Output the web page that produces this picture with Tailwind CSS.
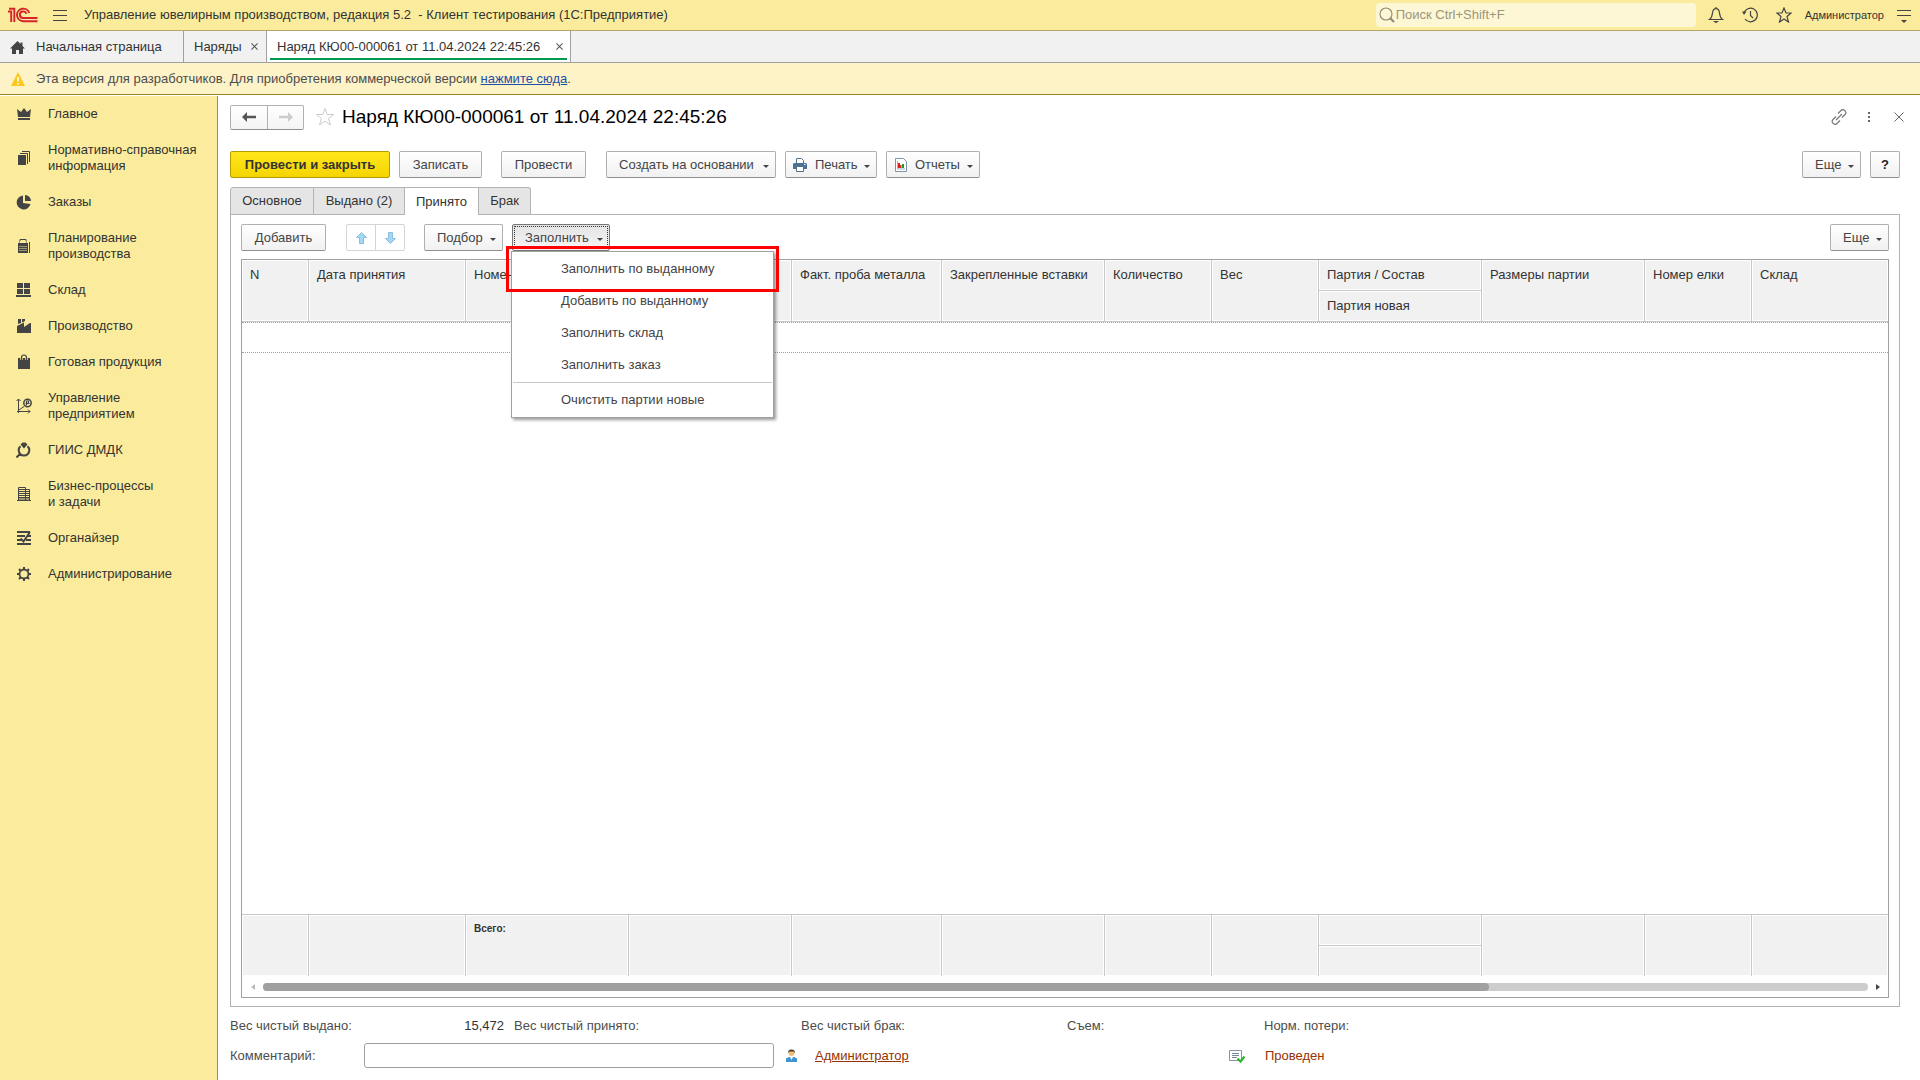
<!DOCTYPE html>
<html lang="ru">
<head>
<meta charset="utf-8">
<title>Управление ювелирным производством</title>
<script src="https://cdn.jsdelivr.net/npm/@tailwindcss/browser@4"></script>
</head>
<body class="flex h-screen flex-col overflow-hidden bg-white font-['Liberation_Sans',Arial,sans-serif] text-[13px] leading-4 text-[#333]">

<!-- Title bar -->
<header class="flex h-[31px] shrink-0 items-center border-b border-[#b3a668] bg-[#faec9c]">
  <svg class="ml-2 h-4 w-[30px]" viewBox="0 0 30 16" fill="none" stroke="#d8232a" stroke-width="1.9"><path d="M0 4.500h3.200V15M1 1.800h5.300V15M21.300 6a6.300 6.300 0 1 0-6.300 8.200H29.500M18.300 6.800a3.300 3.300 0 1 0-3.300 4.200H29.500"/></svg>
  <button class="ml-[15px]" aria-label="Меню"><svg class="h-4 w-[14px]" viewBox="0 0 14 16" stroke="#444" stroke-width="1.200"><path d="M0 3.500h14M0 8.500h14M0 13.500h14"/></svg></button>
  <h1 class="ml-[17px] whitespace-pre text-[#333]">Управление ювелирным производством, редакция 5.2  - Клиент тестирования (1С:Предприятие)</h1>
  <div class="ml-auto flex items-center">
    <label class="flex h-6 w-80 items-center rounded-sm bg-[#fef7d6] pl-[3px]">
      <svg class="h-4 w-4 shrink-0" viewBox="0 0 16 16" fill="none" stroke="#8d8972" stroke-width="1.100"><circle cx="7" cy="7" r="6"/><path d="m11 11 4 4" stroke-width="2"/></svg>
      <input class="ml-px w-full bg-transparent outline-none placeholder:text-[#9a957b]" placeholder="Поиск Ctrl+Shift+F" aria-label="Поиск">
    </label>
    <button class="ml-3" aria-label="Уведомления"><svg class="h-4 w-4" viewBox="0 0 16 16" fill="none" stroke="#444" stroke-width="1.200"><path d="M8 0v1.500M1.500 12.500h13C12.500 11 11.800 9 11.500 6 11.200 3 10 1.700 8 1.700S4.800 3 4.500 6C4.200 9 3.500 11 1.500 12.500Z"/><path d="M5 14h6l-3 2.200z" fill="#444" stroke="none"/></svg></button>
    <button class="ml-[18px]" aria-label="История"><svg class="h-4 w-4" viewBox="0 0 16 16" fill="none" stroke="#444" stroke-width="1.200"><path d="M2 6a6.800 6.800 0 1 1 1 6M8.500 4v4.500l2.500 2.500"/><path d="M0 4.500h4.500L2 8z" fill="#444" stroke="none"/></svg></button>
    <button class="ml-[18px]" aria-label="Избранное"><svg class="h-4 w-4" viewBox="0 0 16 16" fill="none" stroke="#444" stroke-width="1.200"><path d="m8 1 2 5h5l-4 3.500 1.500 5.500L8 12l-4.500 3L5 9.500 1 6h5z"/></svg></button>
    <span class="ml-[13px] text-[11px] text-[#333]">Администратор</span>
    <button class="mr-[9px] ml-[13px]" aria-label="Настройки"><svg class="h-4 w-[14px]" viewBox="0 0 14 16" fill="none" stroke="#444" stroke-width="1.200"><path d="M0 3.500h14M0 8.500h14"/><path d="M4 13h6l-3 3z" fill="#444" stroke="none"/></svg></button>
  </div>
</header>

<!-- Open windows -->
<nav class="flex h-8 shrink-0 border-b border-[#a0a0a0] bg-[#f1f1f1]">
  <a href="#" class="flex w-[184px] items-center border-r border-[#a0a0a0] pl-[10px]">
    <svg class="h-4 w-[15px]" viewBox="0 0 15 16" fill="#444"><path d="M7.500 2 0 9.500h2V15h4v-4h3v4h4V9.500h2L12.500 7V3.500h-2V5z"/></svg>
    <span class="ml-[11px]">Начальная страница</span>
  </a>
  <a href="#" class="flex w-[83px] items-center border-r border-[#a0a0a0] pl-[10px]">Наряды
    <svg class="mr-2 ml-auto h-[7px] w-[7px]" viewBox="0 0 8 8" stroke="#555" stroke-width="1.200"><path d="m.5.5 7 7m0-7-7 7"/></svg>
  </a>
  <a href="#" class="flex w-[304px] border-r border-[#a0a0a0] bg-white px-[3px]">
    <span class="mb-[2px] flex w-full items-center border-b-2 border-[#009b4e] pt-1 pl-[7px]">Наряд КЮ00-000061 от 11.04.2024 22:45:26
    <svg class="mr-1 ml-auto h-[7px] w-[7px]" viewBox="0 0 8 8" stroke="#555" stroke-width="1.200"><path d="m.5.5 7 7m0-7-7 7"/></svg></span>
  </a>
</nav>

<div class="flex h-8 shrink-0 items-center border-b border-[#a08423] bg-[#fef2c7] pl-[11px] text-[#4d4d4d]">
  <svg class="mr-[11px] h-[14px] w-[14px]" viewBox="0 0 14 14"><path d="M7 0 14 14H0z" fill="#fbc91b"/><path d="M7 5v4.500M7 11v1.500" stroke="#fff" stroke-width="1.600"/></svg>
  <p>Эта версия для разработчиков. Для приобретения коммерческой версии <a href="#" class="text-[#1b4fa8] underline">нажмите сюда</a>.</p>
</div>

<div class="flex min-h-0 flex-1 pt-px">
<!-- Sections -->
<nav class="w-[218px] shrink-0 border-r border-[#9c9150] bg-[#faec9c] text-[#333]">
  <a href="#" class="flex items-center py-[10px]"><svg class="mr-4 ml-4 h-4 w-4 shrink-0" viewBox="0 0 16 16" fill="#444"><path d="m1 3 4 3 3-4 3 4 4-3-1 8H2zM2 12h12v2H2z"/></svg>Главное</a>
  <a href="#" class="flex items-center py-[10px]"><svg class="mr-4 ml-4 h-4 w-4 shrink-0" viewBox="0 0 16 16" fill="#444"><path d="M2 5h8v10H2z"/><path d="M4 3.500h7.500V14M6 1.500h7.500V12" fill="none" stroke="#444"/></svg><span>Нормативно-справочная<br>информация</span></a>
  <a href="#" class="flex items-center py-[10px]"><svg class="mr-4 ml-4 h-4 w-4 shrink-0" viewBox="0 0 16 16" fill="#444"><path d="M7 1.500V9l7.500 1A7 7 0 1 1 7 1.500zM9 1a6 6 0 0 1 6 6H9z"/></svg>Заказы</a>
  <a href="#" class="flex items-center py-[10px]"><svg class="mr-4 ml-4 h-4 w-4 shrink-0" viewBox="0 0 16 16"><path d="M2 5h10v10H2zM13 4h1v11h-1z" fill="#444"/><path d="M4 5.500v-4h6v4" fill="none" stroke="#444"/><path d="M4 3h6v2H4z" fill="#faec9c"/><path d="M3.500 8.500h8m-8 2h8m-8 2h8" stroke="#faec9c" stroke-dasharray="1 1"/></svg><span>Планирование<br>производства</span></a>
  <a href="#" class="flex items-center py-[10px]"><svg class="mr-4 ml-4 h-4 w-4 shrink-0" viewBox="0 0 16 16" fill="#444"><path d="M1 1h6v5H1zM8 1h6v5H8zM1 7h6v5H1zM8 7h6v5H8zM0 13h15v2H0z"/></svg>Склад</a>
  <a href="#" class="flex items-center py-[10px]"><svg class="mr-4 ml-4 h-4 w-4 shrink-0" viewBox="0 0 16 16" fill="#444"><path d="M2 1h3v4L2 6zM6 1h3v2L6 4.500zM1 15V8l7-3.500V9l6-4h1v10z"/></svg>Производство</a>
  <a href="#" class="flex items-center py-[10px]"><svg class="mr-4 ml-4 h-4 w-4 shrink-0" viewBox="0 0 16 16" fill="#444"><path d="M2 4h12v11H2z"/><path d="M5.500 6V4a2.500 2.500 0 0 1 5 0v2" fill="none" stroke="#faec9c" stroke-width="2.500"/><path d="M5.500 6.500V3.500a2.500 2.500 0 0 1 5 0v3" fill="none" stroke="#444" stroke-width="1.200"/></svg>Готовая продукция</a>
  <a href="#" class="flex items-center py-[10px]"><svg class="mr-4 ml-4 h-4 w-4 shrink-0" viewBox="0 0 16 16" fill="none" stroke="#444"><path d="M2.500 1v14M.500 3l2-2 2 2M1 13.500h13M12 11.500l2 2-2 2M3 12l5-3.500"/><circle cx="11.500" cy="5" r="3.700" stroke-width="1.500"/><path d="M10.500 3v4.500M9.500 5.500h4M10.500 3h2v2.500" stroke-width="1.200"/></svg><span>Управление<br>предприятием</span></a>
  <a href="#" class="flex items-center py-[10px]"><svg class="mr-4 ml-4 h-4 w-4 shrink-0" viewBox="0 0 16 16" fill="none" stroke="#444" stroke-width="2"><path d="M4.500 4.300a5.300 5.300 0 1 0 7 0M4 12 .500 15.500"/><path d="M4.500 2.500 6.500.500h3l2 2L8 6.500z" fill="#444" stroke="none"/></svg>ГИИС ДМДК</a>
  <a href="#" class="flex items-center py-[10px]"><svg class="mr-4 ml-4 h-4 w-4 shrink-0" viewBox="0 0 16 16" fill="none" stroke="#444"><path d="M2.500 15V1.500h7V15M9.500 3.500h4V15M1 14.500h14M3 3.500h6m-6 2h6m-6 2h6m-6 2h6m-6 2h6m-6 1.500h6m1-7.500h3m-3 2h3m-3 2h3m-3 2h3m-3 1.500h3"/></svg><span>Бизнес-процессы<br>и задачи</span></a>
  <a href="#" class="flex items-center py-[10px]"><svg class="mr-4 ml-4 h-4 w-4 shrink-0" viewBox="0 0 16 16" fill="none" stroke="#444" stroke-width="2"><path d="M1 2h13M1 6h8M12 6h3M1 10h4M10 10h5M1 14h14M4.500 8.500l3 3L14 2"/></svg>Органайзер</a>
  <a href="#" class="flex items-center py-[10px]"><svg class="mr-4 ml-4 h-4 w-4 shrink-0" viewBox="0 0 16 16" fill="none" stroke="#444"><circle cx="8" cy="8" r="4.500" stroke-width="1.800"/><path d="M8 1v2.500M8 12.500V15M1 8h2.500M12.500 8H15M3 3l2 2M11 11l2 2M3 13l2-2M11 5l2-2" stroke-width="2"/></svg>Администрирование</a>
</nav>

<main class="flex min-w-0 flex-1 flex-col pr-5 pl-3">
  <!-- Form title -->
  <div class="flex h-[42px] shrink-0 items-center">
    <div class="flex h-[25px] rounded-xs border border-[#b0b0b0] border-b-[#909090] bg-linear-to-b from-white to-[#f4f4f4]">
      <button class="flex w-[37px] items-center justify-center border-r border-[#b0b0b0]" aria-label="Назад"><svg class="h-[10px] w-[14px]" viewBox="0 0 14 10" fill="#555"><path d="M0 5 5 0v3.800h9v2.400H5V10z"/></svg></button>
      <button class="flex w-[35px] items-center justify-center" aria-label="Вперед"><svg class="h-[10px] w-[14px]" viewBox="0 0 14 10" fill="#ccc"><path d="m14 5-5-5v3.800H0v2.400h9V10z"/></svg></button>
    </div>
    <button class="ml-3" aria-label="В избранное"><svg class="h-5 w-[18px]" viewBox="0 0 18 20" fill="none" stroke="#ccc"><path d="m9 1.500 2.200 6h6.300l-5 4 2 6.500L9 14l-5.500 4 2-6.500-5-4h6.300z"/></svg></button>
    <h2 class="ml-2 text-[19px] text-black">Наряд КЮ00-000061 от 11.04.2024 22:45:26</h2>
    <div class="-mr-[7px] ml-auto flex items-center gap-[14px]">
      <button aria-label="Ссылка"><svg class="h-4 w-4" viewBox="0 0 16 16" fill="none" stroke="#777" stroke-width="1.200"><path d="m5 11 6-6M7 4.500l3-3c2.500-2.500 6.500 1.500 4 4l-3 3M9 11.500l-3 3c-2.500 2.500-6.500-1.500-4-4l3-3"/></svg></button>
      <button aria-label="Еще"><svg class="h-4 w-4" viewBox="0 0 16 16" fill="#666"><path d="M7 3h2v2H7zM7 7h2v2H7zM7 11h2v2H7z"/></svg></button>
      <button aria-label="Закрыть"><svg class="h-4 w-4" viewBox="0 0 16 16" stroke="#666"><path d="m3.500 3.500 9 9M12.500 3.500l-9 9"/></svg></button>
    </div>
  </div>

  <!-- Command bar -->
  <div class="mt-[13px] flex h-[27px] shrink-0 text-[#444]">
    <button class="w-[160px] rounded-xs border border-[#b59b00] bg-linear-to-b from-[#ffe61a] to-[#f5d500] font-bold text-[#333]">Провести и закрыть</button>
    <button class="ml-[9px] w-[83px] rounded-xs border border-[#b0b0b0] border-b-[#909090] bg-linear-to-b from-white to-[#f1f1f1]">Записать</button>
    <button class="ml-[19px] w-[85px] rounded-xs border border-[#b0b0b0] border-b-[#909090] bg-linear-to-b from-white to-[#f1f1f1]">Провести</button>
    <button class="ml-5 flex w-[170px] items-center justify-between rounded-xs border border-[#b0b0b0] border-b-[#909090] bg-linear-to-b from-white to-[#f1f1f1] pr-[6px] pl-3">Создать на основании<svg class="mt-[3px] h-[3px] w-[6px]" viewBox="0 0 6 3" fill="#444"><path d="M0 0h6L3 3z"/></svg></button>
    <button class="ml-[9px] flex w-[92px] items-center rounded-xs border border-[#b0b0b0] border-b-[#909090] bg-linear-to-b from-white to-[#f1f1f1] pr-[6px] pl-[7px]"><svg class="mr-2 h-[14px] w-[14px]" viewBox="0 0 14 14"><path d="M3.500 5V.500h5l2 2V5" fill="#fff" stroke="#56708a"/><path d="M1 5h12l1 1v5H0V6z" fill="#4a7299"/><path d="M3.500 8.500h7v5h-7z" fill="#fff" stroke="#56708a"/><path d="M11 6.500h1.500" stroke="#fff"/></svg>Печать<svg class="mt-[3px] ml-auto h-[3px] w-[6px]" viewBox="0 0 6 3" fill="#444"><path d="M0 0h6L3 3z"/></svg></button>
    <button class="ml-[9px] flex w-[94px] items-center rounded-xs border border-[#b0b0b0] border-b-[#909090] bg-linear-to-b from-white to-[#f1f1f1] pr-[6px] pl-2"><svg class="mr-2 h-[14px] w-3" viewBox="0 0 12 14"><path d="M.500.500h8l3 3v10H.500z" fill="#fff" stroke="#7f93a8"/><path d="M2.500 3v8H10" fill="none" stroke="#9fb0c0"/><path d="M3 5h2v5H3z" fill="#e02020"/><path d="M5 7h1.500v3H5z" fill="#e02020"/><path d="M7 6h2v4H7z" fill="#15a015"/></svg>Отчеты<svg class="mt-[3px] ml-auto h-[3px] w-[6px]" viewBox="0 0 6 3" fill="#444"><path d="M0 0h6L3 3z"/></svg></button>
    <button class="ml-auto flex w-[59px] items-center justify-between rounded-xs border border-[#b0b0b0] border-b-[#909090] bg-linear-to-b from-white to-[#f1f1f1] pr-[6px] pl-3">Еще<svg class="mt-[3px] h-[3px] w-[6px]" viewBox="0 0 6 3" fill="#444"><path d="M0 0h6L3 3z"/></svg></button>
    <button class="ml-[9px] w-[30px] rounded-xs border border-[#b0b0b0] border-b-[#909090] bg-linear-to-b from-white to-[#f1f1f1] font-bold text-[#222]">?</button>
  </div>

  <!-- Page tabs -->
  <div class="z-10 mt-[9px] -mb-px flex h-7 shrink-0 text-[#333]" role="tablist">
    <button role="tab" class="w-[84px] rounded-tl-[3px] border border-[#b3b3b3] bg-[#e5e5e5]">Основное</button>
    <button role="tab" class="w-[90px] border-y border-[#b3b3b3] bg-[#e5e5e5]">Выдано (2)</button>
    <button role="tab" aria-selected="true" class="w-[75px] border-x border-t border-[#b3b3b3] bg-white">Принято</button>
    <button role="tab" class="w-[52px] rounded-tr-[3px] border-y border-r border-[#b3b3b3] bg-[#e5e5e5]">Брак</button>
  </div>

  <section class="flex min-h-0 flex-1 flex-col border border-[#b3b3b3] px-[10px] pt-[9px] pb-2">
    <div class="flex h-[27px] shrink-0 text-[#444]">
      <button class="w-[85px] rounded-xs border border-[#b0b0b0] border-b-[#909090] bg-linear-to-b from-white to-[#f1f1f1]">Добавить</button>
      <div class="ml-5 flex w-[59px] rounded-xs border border-[#d5d5d5]">
        <button class="flex flex-1 items-center justify-center border-r border-[#d5d5d5]" aria-label="Вверх"><svg class="h-3 w-[11px]" viewBox="0 0 11 12" fill="#a3d8f5" stroke="#8bbfdc"><path d="m5.500.500 5 5h-3v6h-4v-6h-3z"/></svg></button>
        <button class="flex flex-1 items-center justify-center" aria-label="Вниз"><svg class="h-3 w-[11px]" viewBox="0 0 11 12" fill="#a3d8f5" stroke="#8bbfdc"><path d="m5.500 11.500-5-5h3v-6h4v6h3z"/></svg></button>
      </div>
      <button class="ml-[19px] flex w-[79px] items-center justify-between rounded-xs border border-[#b0b0b0] border-b-[#909090] bg-linear-to-b from-white to-[#f1f1f1] pr-[6px] pl-3">Подбор<svg class="mt-[3px] h-[3px] w-[6px]" viewBox="0 0 6 3" fill="#444"><path d="M0 0h6L3 3z"/></svg></button>
      <div class="relative ml-[9px] flex">
        <button class="flex w-[98px] rounded-xs border border-[#777] bg-linear-to-b from-[#e4e4e4] to-[#f6f6f6] p-px" aria-expanded="true"><span class="flex h-full w-full items-center justify-between border border-dotted border-[#333] pr-1 pl-[10px]">Заполнить<svg class="mt-[3px] h-[3px] w-[6px]" viewBox="0 0 6 3" fill="#444"><path d="M0 0h6L3 3z"/></svg></span></button>
        <div class="absolute top-[27px] -left-px z-20 flex w-[263px] flex-col border border-[#a0a0a0] bg-white py-px shadow-[2px_2px_3px_#0006]" role="menu">
          <button role="menuitem" class="h-8 pl-[49px] text-left">Заполнить по выданному</button>
          <button role="menuitem" class="h-8 pl-[49px] text-left">Добавить по выданному</button>
          <button role="menuitem" class="h-8 pl-[49px] text-left">Заполнить склад</button>
          <button role="menuitem" class="h-8 pl-[49px] text-left">Заполнить заказ</button>
          <hr class="mx-px my-px border-[#c8c8c8]">
          <button role="menuitem" class="h-8 pl-[49px] text-left">Очистить партии новые</button>
        </div>
        <div class="absolute top-[22px] -left-[6px] z-30 h-[46px] w-[273px] border-3 border-[#f00]"></div>
      </div>
      <button class="ml-auto flex w-[59px] items-center justify-between rounded-xs border border-[#b0b0b0] border-b-[#909090] bg-linear-to-b from-white to-[#f1f1f1] pr-[6px] pl-3">Еще<svg class="mt-[3px] h-[3px] w-[6px]" viewBox="0 0 6 3" fill="#444"><path d="M0 0h6L3 3z"/></svg></button>
    </div>

    <div class="mt-2 flex min-h-0 flex-1 flex-col border border-[#a0a0a0]">
      <div class="min-h-0 flex-1">
      <table class="h-full w-full table-fixed border-separate border-spacing-0 text-left">
        <colgroup><col class="w-[67px]"><col class="w-[157px]"><col class="w-[163px]"><col class="w-[163px]"><col class="w-[150px]"><col class="w-[163px]"><col class="w-[107px]"><col class="w-[107px]"><col class="w-[163px]"><col class="w-[163px]"><col class="w-[107px]"><col></colgroup>
        <thead class="[&_th]:overflow-hidden [&_th]:border-r [&_th]:border-b [&_th]:border-[#c8c8c8] [&_th]:bg-[#f1f1f1] [&_th]:px-2 [&_th]:pt-[7px] [&_th]:align-top [&_th]:font-normal [&_th]:whitespace-nowrap [&_th]:shadow-[inset_0_0_0_1px_#fff]">
          <tr class="h-[31px]"><th rowspan="2">N</th><th rowspan="2">Дата принятия</th><th rowspan="2">Номенклатура</th><th rowspan="2"></th><th rowspan="2">Факт. проба металла</th><th rowspan="2">Закрепленные вставки</th><th rowspan="2">Количество</th><th rowspan="2">Вес</th><th>Партия / Состав</th><th rowspan="2">Размеры партии</th><th rowspan="2">Номер елки</th><th rowspan="2" class="border-r-0!">Склад</th></tr>
          <tr class="h-[31px]"><th>Партия новая</th></tr>
        </thead>
        <tbody>
          <tr class="h-[31px]"><td colspan="12" class="border-y border-dotted border-[#a0a0a0]"></td></tr>
          <tr><td colspan="12"></td></tr>
        </tbody>
        <tfoot class="[&_td]:border-t [&_td]:border-r [&_td]:border-[#c8c8c8] [&_td]:bg-[#f1f1f1] [&_td]:px-2 [&_td]:pt-[6px] [&_td]:align-top [&_td]:shadow-[inset_0_0_0_1px_#fff]">
          <tr class="h-[31px]"><td rowspan="2"></td><td rowspan="2"></td><td rowspan="2" class="text-[10px] font-bold">Всего:</td><td rowspan="2"></td><td rowspan="2"></td><td rowspan="2"></td><td rowspan="2"></td><td rowspan="2"></td><td></td><td rowspan="2"></td><td rowspan="2"></td><td rowspan="2" class="border-r-0!"></td></tr>
          <tr class="h-[31px]"><td></td></tr>
        </tfoot>
      </table>
      </div>
      <div class="flex h-[21px] shrink-0 items-center pr-2 pl-[9px]">
        <svg class="h-[6px] w-1" viewBox="0 0 4 6" fill="#bbb"><path d="M4 0v6L0 3z"/></svg>
        <div class="mx-2 h-2 flex-1 rounded-full bg-[#cdcdcd]"><div class="h-2 rounded-full bg-[#a0a0a0]" style="width:76.4%"></div></div>
        <svg class="h-[6px] w-1" viewBox="0 0 4 6" fill="#444"><path d="M0 0v6l4-3z"/></svg>
      </div>
    </div>
  </section>

  <!-- Totals and comment -->
  <footer class="shrink-0 pt-[11px] pb-3 text-[#4d4d4d]">
    <div class="flex h-4">
      <span class="w-[134px]">Вес чистый выдано:</span><span class="w-[140px] text-right text-[#333]">15,472</span>
      <span class="ml-[10px] w-[287px]">Вес чистый принято:</span>
      <span class="w-[266px]">Вес чистый брак:</span>
      <span class="w-[197px]">Съем:</span>
      <span>Норм. потери:</span>
    </div>
    <div class="mt-[9px] flex h-[25px] items-center">
      <label for="comment" class="w-[134px]">Комментарий:</label>
      <input id="comment" class="h-[25px] w-[410px] rounded-[3px] border border-[#a0a0a0] bg-white px-1">
      <svg class="ml-3 h-[14px] w-[11px]" viewBox="0 0 11 14"><circle cx="5.500" cy="4" r="3" fill="#f0be78"/><path d="M2 4a3.500 3.500 0 0 1 7 0L7.500 2.500h-4z" fill="#4a3a2a"/><path d="M0 13V9.500L3 8h5l3 1.500V13z" fill="#3f95cf"/><path d="m4 8 1.500 3L7 8z" fill="#fff"/></svg>
      <a href="#" class="ml-[18px] w-[414px] text-[#963200] underline">Администратор</a>
      <svg class="mr-5 h-[14px] w-4" viewBox="0 0 16 14"><path d="M.500 1.500h12v10H.500z" fill="#fff" stroke="#8494ab"/><path d="M3 4.500h7M3 6.500h7M3 8.500h5" stroke="#7788a0"/><path d="m8.500 9.500 3 3 4-5" fill="none" stroke="#2cb52c" stroke-width="2.200"/></svg>
      <span class="text-[#963200]">Проведен</span>
    </div>
  </footer>
</main>
</div>
</body>
</html>
